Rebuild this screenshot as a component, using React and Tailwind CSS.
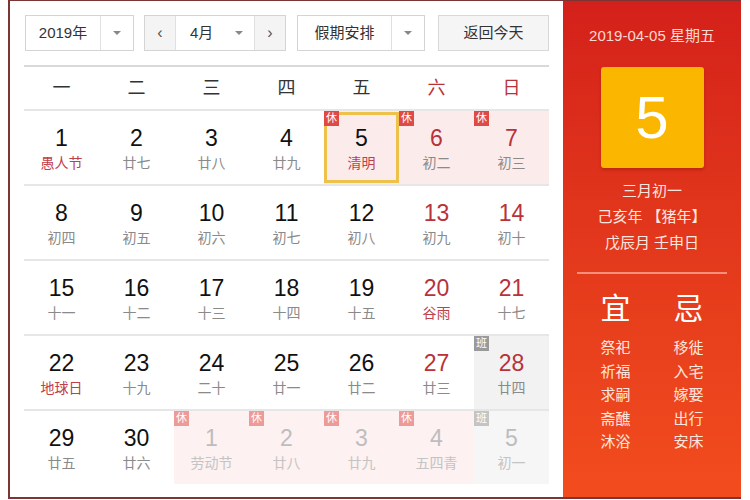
import React from 'react'

const FONT = { fontFamily: '"Liberation Sans", "Noto Sans CJK SC", sans-serif' }

const weekdays = ['一', '二', '三', '四', '五', '六', '日']

// t: 'rest' 休, 'work' 班; f: faded (next month); fest: festival text in red
const weeks = [
  [
    { d: 1, l: '愚人节', fest: true },
    { d: 2, l: '廿七' },
    { d: 3, l: '廿八' },
    { d: 4, l: '廿九' },
    { d: 5, l: '清明', fest: true, t: 'rest', sel: true },
    { d: 6, l: '初二', t: 'rest' },
    { d: 7, l: '初三', t: 'rest' },
  ],
  [
    { d: 8, l: '初四' },
    { d: 9, l: '初五' },
    { d: 10, l: '初六' },
    { d: 11, l: '初七' },
    { d: 12, l: '初八' },
    { d: 13, l: '初九' },
    { d: 14, l: '初十' },
  ],
  [
    { d: 15, l: '十一' },
    { d: 16, l: '十二' },
    { d: 17, l: '十三' },
    { d: 18, l: '十四' },
    { d: 19, l: '十五' },
    { d: 20, l: '谷雨', fest: true },
    { d: 21, l: '十七' },
  ],
  [
    { d: 22, l: '地球日', fest: true },
    { d: 23, l: '十九' },
    { d: 24, l: '二十' },
    { d: 25, l: '廿一' },
    { d: 26, l: '廿二' },
    { d: 27, l: '廿三' },
    { d: 28, l: '廿四', t: 'work' },
  ],
  [
    { d: 29, l: '廿五' },
    { d: 30, l: '廿六' },
    { d: 1, l: '劳动节', t: 'rest', f: true },
    { d: 2, l: '廿八', t: 'rest', f: true },
    { d: 3, l: '廿九', t: 'rest', f: true },
    { d: 4, l: '五四青', t: 'rest', f: true },
    { d: 5, l: '初一', t: 'work', f: true },
  ],
]

const yi = ['祭祀', '祈福', '求嗣', '斋醮', '沐浴']
const ji = ['移徙', '入宅', '嫁娶', '出行', '安床']

function Caret() {
  return <span className="block w-0 h-0 border-l-[4px] border-r-[4px] border-t-[4px] border-l-transparent border-r-transparent border-t-[#888]"></span>
}

function Cell({ c, col }) {
  const weekend = col >= 5
  let bg = ''
  if (c.t === 'rest') bg = c.f ? 'bg-[#fdf1f1]' : 'bg-[#fcebeb]'
  if (c.t === 'work') bg = c.f ? 'bg-[#f6f6f6]' : 'bg-[#f2f2f2]'

  let numColor = weekend ? 'text-[#b8323a]' : 'text-[#111]'
  let lunarColor = c.fest ? 'text-[#c0404a]' : 'text-[#8a8a8a]'
  if (c.f) {
    numColor = 'text-[#bdbdbd]'
    lunarColor = 'text-[#c4c4c4]'
  }

  return (
    <div className={`relative h-[73px] flex flex-col items-center pt-[14px] ${bg}`}>
      {c.sel && <div className="absolute inset-x-[0px] inset-y-[1px] border-[3px] border-[#eec24a] pointer-events-none"></div>}
      {c.t && (
        <span
          className={`absolute left-0 top-0 w-[15px] h-[15px] flex items-center justify-center text-[11px] leading-none text-white ${
            c.t === 'rest' ? (c.f ? 'bg-[#ee9a98]' : 'bg-[#df4a46]') : c.f ? 'bg-[#c4c4c4]' : 'bg-[#9a9a9a]'
          }`}
        >
          {c.t === 'rest' ? '休' : '班'}
        </span>
      )}
      <span className={`text-[23px] leading-[26px] ${numColor}`}>{c.d}</span>
      <span className={`text-[14px] leading-[18px] mt-[3px] ${lunarColor}`}>{c.l}</span>
    </div>
  )
}

export default function App() {
  return (
    <div className="w-[750px] h-[500px] bg-white pl-[8px] overflow-hidden" style={FONT}>
      <div className="w-[733px] h-[499px] flex border-t border-l-2 border-b-2 border-[#7d3434]">
        {/* left: calendar */}
        <div className="w-[553px] bg-white pl-[14px] pt-[14px]">
          <div className="flex items-center h-[36px] text-[15px] text-[#333]">
            <div className="flex h-full w-[109px] ml-[1px] border border-[#d4d4d4] bg-white">
              <span className="flex-1 flex items-center justify-center">2019年</span>
              <span className="w-[33px] border-l border-[#e0e0e0] flex items-center justify-center"><Caret /></span>
            </div>
            <div className="flex h-full w-[142px] ml-[10px] border border-[#d4d4d4] bg-white">
              <span className="w-[30px] bg-[#f4f4f4] flex items-center justify-center text-[16px] text-[#555]">‹</span>
              <span className="flex-1 border-l border-r border-[#e0e0e0] flex items-center pl-[14px] gap-[22px]">
                4月 <Caret />
              </span>
              <span className="w-[30px] bg-[#f4f4f4] flex items-center justify-center text-[16px] text-[#555]">›</span>
            </div>
            <div className="flex h-full w-[128px] ml-[11px] border border-[#d4d4d4] bg-white">
              <span className="flex-1 flex items-center justify-center">假期安排</span>
              <span className="w-[33px] border-l border-[#e0e0e0] flex items-center justify-center"><Caret /></span>
            </div>
            <div className="h-full w-[111px] ml-[13px] border border-[#d8d8d8] bg-[#f5f5f5] flex items-center justify-center">返回今天</div>
          </div>

          <div className="w-[525px] mt-[14px] border-t-2 border-[#d9d9d9]">
            <div className="grid grid-cols-7 h-[44px] items-center text-[18px] border-b-2 border-[#e6e6e6]">
              {weekdays.map((w, i) => (
                <span key={w} className={`text-center ${i >= 5 ? 'text-[#b8323a]' : 'text-[#333]'}`}>{w}</span>
              ))}
            </div>
            {weeks.map((wk, r) => (
              <div key={r} className={`grid grid-cols-7 ${r < 4 ? 'border-b-2 border-[#e6e6e6]' : ''}`}>
                {wk.map((c, i) => (
                  <Cell key={i} c={c} col={i} />
                ))}
              </div>
            ))}
          </div>
        </div>

        {/* right: today */}
        <div className="w-[178px] bg-gradient-to-b from-[#d4201a] to-[#f24c1e] flex flex-col items-center text-[#ffe6de]">
          <div className="mt-[25px] text-[15px] leading-[20px] text-[#fdd9cf]">2019-04-05 星期五</div>
          <div className="mt-[21px] w-[103px] h-[101px] rounded-[3px] bg-[#fbb700] shadow-[0_2px_3px_rgba(120,20,0,0.35)] flex items-center justify-center text-white text-[60px] leading-none">
            5
          </div>
          <div className="mt-[10px] text-[15px] leading-[26px] text-center">
            <div>三月初一</div>
            <div>己亥年 【猪年】</div>
            <div>戊辰月 壬申日</div>
          </div>
          <div className="mt-[16px] w-[150px] h-[2px] bg-[#f7907a]"></div>
          <div className="flex w-full justify-center gap-[25px] mt-[18px]">
            <div className="w-[48px] flex flex-col items-center">
              <span className="text-[30px] leading-[34px] text-white">宜</span>
              <div className="mt-[10px] text-[15px] leading-[23.5px] text-center">
                {yi.map((t) => <div key={t}>{t}</div>)}
              </div>
            </div>
            <div className="w-[48px] flex flex-col items-center">
              <span className="text-[30px] leading-[34px] text-white">忌</span>
              <div className="mt-[10px] text-[15px] leading-[23.5px] text-center">
                {ji.map((t) => <div key={t}>{t}</div>)}
              </div>
            </div>
          </div>
        </div>
      </div>
    </div>
  )
}
